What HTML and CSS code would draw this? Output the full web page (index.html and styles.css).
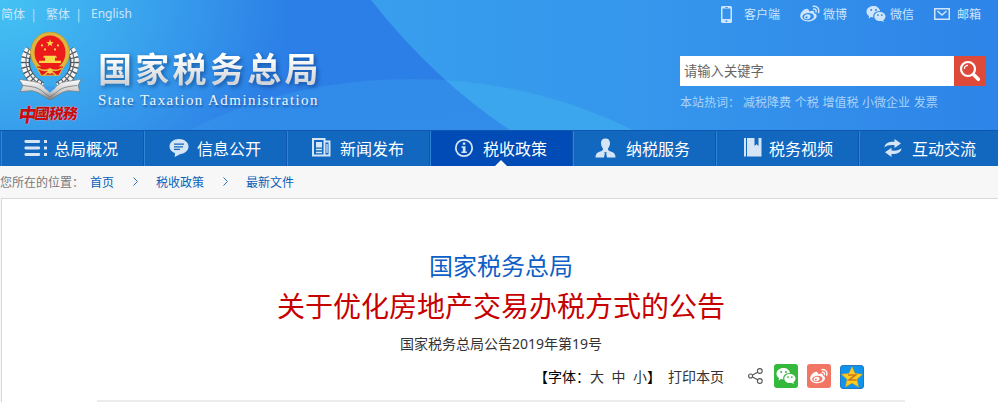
FILE: index.html
```html
<!DOCTYPE html>
<html lang="zh-CN">
<head>
    <meta charset="UTF-8">
    <meta name="viewport" content="width=device-width, initial-scale=1.0">
    <title>国家税务总局</title>
    <link rel="stylesheet" href="styles.css">
</head>
<body>

<!-- shared icon shapes -->
<svg class="sprite" width="0" height="0">
    <symbol id="wechat" viewBox="0 0 20 18">
        <path fill="currentColor" fill-rule="evenodd" d="M7.500 1C3.400 1 .5 3.500 .5 6.700c0 1.900 1 3.400 2.600 4.500l-.6 2.200 2.500-1.300c.8.200 1.500.3 2.300.3-.7-3.500 2.200-6.400 6.800-6.300C13.500 3.100 10.900 1 7.500 1zM5.200 3.900a1 1 0 1 1 0 2 1 1 0 0 1 0-2zm4.700 0a1 1 0 1 1 0 2 1 1 0 0 1 0-2z"/>
        <path fill="currentColor" fill-rule="evenodd" d="M13.900 6.900c-3.200 0-5.600 2-5.600 4.600s2.400 4.600 5.600 4.600c.7 0 1.300-.1 1.900-.2l2 1.100-.5-1.800c1.300-.9 2.200-2.200 2.200-3.700 0-2.600-2.400-4.600-5.600-4.600zM12 9.200a.9.900 0 1 1 0 1.800.9.900 0 0 1 0-1.800zm3.800 0a.9.900 0 1 1 0 1.800.9.900 0 0 1 0-1.800z"/>
    </symbol>
    <symbol id="weibo" viewBox="0 0 20 18">
        <path fill="currentColor" fill-rule="evenodd" d="M8 4.300C6.900 3.200 4.600 4 2.600 6 1 7.700.2 9.500.2 11.100.2 14.300 3.900 16.500 8 16.500c4.900 0 8.700-2.600 8.700-5.500 0-1.700-1.300-2.600-2.700-3 .6-1.600-.3-3.200-4.900-1.500.2-.9 0-1.600-1.100-2.200zM7.900 8.100c3.200-.3 5.800 1 5.900 3.100.2 2-2.200 3.800-5.400 4-3.200.3-5.800-1-6-3.100-.1-2 2.300-3.800 5.500-4z"/>
        <path fill="currentColor" fill-rule="evenodd" d="M8 9.300c-2-.2-4 1-4 2.800 0 1.600 1.500 2.500 3.300 2.200 2-.3 3.400-1.700 3.300-3.100C10.500 10.200 9.500 9.400 8 9.300zM6.500 11.300a1.100 1.100 0 1 1 0 2.200 1.100 1.100 0 0 1 0-2.200z"/>
        <path fill="none" stroke="currentColor" stroke-width="1.500" stroke-linecap="round" d="M13.300 1.300c3.700-.7 6.400 2.600 5.200 6.300M13.700 4.100c1.700-.2 2.800 1.100 2.300 2.800"/>
    </symbol>
</svg>

<header class="header">
    <svg class="header-bg" width="998" height="130" viewBox="0 0 998 130">
        <defs>
            <linearGradient id="bgRight" x1="0" x2="1" y1="0" y2="0">
                <stop offset="0" stop-color="#389eed"/>
                <stop offset=".45" stop-color="#3596ec"/>
                <stop offset="1" stop-color="#2e84e8"/>
            </linearGradient>
            <clipPath id="rightSide"><path d="M371 0Q434 80 510 130H998V0z"/></clipPath>
        </defs>
        <path fill="url(#bgRight)" d="M371 0Q434 80 510 130H998V0z"/>
        <path fill="#3598ec" fill-opacity=".5" d="M190 130Q290 79 410 79T633 130z"/>
        <path fill="#40aff0" fill-opacity=".6" clip-path="url(#rightSide)" d="M190 130Q290 79 410 79T633 130z"/>
    </svg>

    <div class="top-bar">
        <div class="languages">
            <a>简体</a><i>|</i><a>繁体</a><i>|</i><a class="english">English</a>
        </div>
        <ul class="top-links">
            <li class="link-app">
                <svg width="11" height="17" viewBox="0 0 11 17"><path fill="currentColor" fill-rule="evenodd" d="M1.500 0h8Q11 0 11 1.500v14Q11 17 9.500 17h-8Q0 17 0 15.500v-14Q0 0 1.500 0zM1.500 2.500v10.500h8V2.500zM4 1v.7h3V1zM5.500 14.200a.9.900 0 1 0 0 1.800.9.900 0 0 0 0-1.800z"/></svg>
                客户端
            </li>
            <li class="link-weibo"><svg width="20" height="18"><use href="#weibo"/></svg>微博</li>
            <li class="link-wechat"><svg width="20" height="18"><use href="#wechat"/></svg>微信</li>
            <li class="link-mail">
                <svg width="16" height="12" viewBox="0 0 16 12"><path fill="none" stroke="currentColor" stroke-width="1.500" d="M.75.75h14.500v10.500H.75zM3.500 3l4.500 4 4.500-4"/></svg>
                邮箱
            </li>
        </ul>
    </div>

    <div class="brand-row">
        <div class="brand">
            <div class="emblem">
                <svg width="66" height="70" viewBox="0 0 66 68" preserveAspectRatio="none">
                    <defs>
                        <linearGradient id="silver" x1="0" x2="0" y1="0" y2="1">
                            <stop offset="0" stop-color="#fff"/>
                            <stop offset=".6" stop-color="#c9c9c9"/>
                            <stop offset="1" stop-color="#777"/>
                        </linearGradient>
                    </defs>
                    <g fill="none" stroke="#4c555c" stroke-width="9">
                        <path d="M13 17C5 28 7 43 25 53M53 17c8 11 6 26-12 36"/>
                    </g>
                    <g fill="none" stroke="#f4f4f4" stroke-width="7.500" stroke-dasharray="3.500 1.200">
                        <path d="M12 17C4 28 7 43 25 53M54 17c8 11 5 26-13 36"/>
                    </g>
                    <path fill="none" stroke="#626a70" stroke-width="1.200" d="M12 17C5 30 10 43 25 53M54 17c7 13 2 26-13 36"/>
                    <path fill="url(#silver)" stroke="#777" stroke-width=".7" d="M2 46l14 2q6 0 11 5l6 3 6-3q5-5 11-5l14-2-3 6 2 6-12-1q-6 1-11 5l-7 4-7-4q-5-4-11-5L3 58l3-6z"/>
                    <path fill="#3b9be9" d="M27 54q6-3 12 0l-6 5z"/>
                    <path fill="none" stroke="#777" stroke-width=".8" d="M6 52l8 1q8 1 13 6l6 4 6-4q5-5 13-6l8-1"/>
                    <ellipse cx="33" cy="20" rx="19.500" ry="20" fill="#dfb63c" stroke="#b8932c" stroke-width=".7"/>
                    <path fill="#e5161a" stroke="#dfb63c" d="M19 33l5 9h18l5-9z"/>
                    <ellipse cx="33" cy="20" rx="15.500" ry="16.500" fill="#ed1a1c"/>
                    <path fill="#f8d748" d="M33 7l1 2.600h2.800l-2.200 1.700.8 2.700-2.400-1.600-2.400 1.600.8-2.700-2.200-1.700H32z"/>
                    <g fill="#f8d748">
                        <circle cx="25" cy="13" r="1.100"/><circle cx="41" cy="13" r="1.100"/>
                        <circle cx="28" cy="17" r="1.100"/><circle cx="38" cy="17" r="1.100"/>
                        <path d="M27 23h12l1 2H26zM28 25h10v3H28zM22 28h22v2H22z"/>
                    </g>
                    <path fill="none" stroke="#e9c140" stroke-width="1.500" d="M21 35q6 4 12 1 6 3 12-1M27 42l6-5 6 5"/>
                    <circle cx="33" cy="38" r="2.500" fill="#f1cf4b"/>
                </svg>
                <div class="emblem-name"><span>中</span><span>國</span><span>税</span><span>務</span></div>
            </div>
            <div class="brand-text">
                <div class="brand-cn">国家税务总局</div>
                <div class="brand-en">State Taxation Administration</div>
            </div>
        </div>

        <div class="search">
            <form class="search-form">
                <input type="text" placeholder="请输入关键字">
                <button type="button" aria-label="搜索">
                    <svg width="22" height="22" viewBox="0 0 22 22" fill="none" stroke="#fff"><circle cx="9" cy="9" r="7" stroke-width="2.200"/><path stroke-width="1.200" d="M5.300 9q.2-3.500 3.700-3.700"/><path stroke-width="3.600" stroke-linecap="round" d="M14.800 14.800l4.500 4.500"/></svg>
                </button>
            </form>
            <div class="hot-words"><span>本站热词：</span>减税降费 个税 增值税 小微企业 发票</div>
        </div>
    </div>
</header>

<nav class="nav">
    <a class="nav-about">
        <svg width="24" height="18" viewBox="0 0 24 18"><path stroke="currentColor" stroke-width="2.800" stroke-linecap="round" d="M1.800 2.500h13M1.800 9h13M1.800 15.500h13"/><path fill="currentColor" d="M20 1h3v3h-3zM20 7.500h3v3h-3zM20 14h3v3h-3z"/></svg>
        总局概况
    </a>
    <a class="nav-open">
        <svg width="20" height="20" viewBox="0 0 20 20"><path fill="currentColor" d="M10 1c5.300 0 9.500 3.200 9.500 7.600 0 4-3.500 7-8 7.500L5.700 19l.3-3.800C2.700 14 .5 11.600.5 8.600.5 4.200 4.700 1 10 1z"/><path stroke="#1267bf" stroke-width="1.200" d="M5 6.200h10M5 8.800h9M5 11.400h6"/></svg>
        信息公开
    </a>
    <a class="nav-news">
        <svg width="19" height="19" viewBox="0 0 19 19" fill="none" stroke="currentColor"><path stroke-width="2" d="M1 1h11.500v16.500H1zM12.500 3.500H17.500v14H12"/><path stroke-width="1.300" d="M4 11.500h6M4 14.500h6M15 6v9"/><path fill="currentColor" stroke="none" d="M4 4h6v5.500H4z"/></svg>
        新闻发布
    </a>
    <a class="nav-policy active">
        <svg width="20" height="20" viewBox="0 0 20 20"><circle cx="10" cy="10" r="8.200" fill="none" stroke="currentColor" stroke-width="1.800"/><path fill="currentColor" d="M8.800 4.500h2.500v2.300H8.800zM7.500 8.200h4v5.300h1.300V15H7.400v-1.500h1.400V9.700H7.500z"/></svg>
        税收政策
    </a>
    <a class="nav-service">
        <svg width="21" height="20" viewBox="0 0 21 20"><path fill="currentColor" d="M10.500.5c3 0 4.700 2 4.500 4.900-.2 2.600-1.200 4-2 5.100 0 2 .8 2.500 4 3.400 2.400.7 3.500 2.600 3.500 5.600H12l-.8-4 .7-1.300H9.100l.7 1.300-.8 4H.5c0-3 1.100-4.900 3.500-5.600 3.200-.9 4-1.400 4-3.400-.8-1.100-1.800-2.500-2-5.100C5.800 2.500 7.500.5 10.500.5z"/></svg>
        纳税服务
    </a>
    <a class="nav-video">
        <svg width="18" height="19" viewBox="0 0 18 19"><path fill="currentColor" d="M0 0h2v18.500H0zM3 0h7.500v8l2-1.800 2 1.800V0h3v18.500H3z"/></svg>
        税务视频
    </a>
    <a class="nav-talk">
        <svg width="18" height="18" viewBox="0 0 18 18"><path fill="currentColor" d="M.5 8.500C.8 4.500 4 2.600 10.500 2.700V0l6.500 4.500L10.500 9V6.200C5.500 5.800 3 6.500.5 8.500zM17.500 9.300c-.3 4-3.500 5.900-10 5.800V18L1 13.300l6.500-4.500v2.800c5 .4 7.500-.3 10-2.300z"/></svg>
        互动交流
    </a>
</nav>

<div class="breadcrumb">
    <span class="crumb-label">您所在的位置：</span>
    <a>首页</a>
    <svg width="5" height="9" viewBox="0 0 5 9"><path d="M.5.5l4 4-4 4"/></svg>
    <a>税收政策</a>
    <svg width="5" height="9" viewBox="0 0 5 9"><path d="M.5.5l4 4-4 4"/></svg>
    <a>最新文件</a>
</div>

<main class="article">
    <h2>国家税务总局</h2>
    <h1>关于优化房地产交易办税方式的公告</h1>
    <p class="doc-number">国家税务总局公告2019年第19号</p>
    <div class="tools">
        <div class="font-size"><b>【字体：</b><a>大</a><a>中</a><a>小</a><b>】</b></div>
        <a class="print">打印本页</a>
        <svg class="share" width="15" height="16" viewBox="0 0 15 16" fill="none" stroke="#555" stroke-width="1.100"><circle cx="2.600" cy="8" r="2"/><circle cx="11.800" cy="3" r="2.400"/><circle cx="11.800" cy="13" r="2.400"/><path d="M4.500 7l5.200-2.800M4.500 9l5.200 2.800"/></svg>
        <span class="badge badge-wechat"><svg width="20" height="18"><use href="#wechat"/></svg></span>
        <span class="badge badge-weibo"><svg width="18" height="17"><use href="#weibo"/></svg></span>
        <span class="badge badge-qzone"><svg width="22" height="22" viewBox="0 0 22 22"><path fill="#ffcd20" stroke="#e8a80c" stroke-width=".6" d="M11 .8l3 6.700 7.400.8-5.500 5 1.500 7.500L11 17l-6.400 3.800 1.500-7.500-5.500-5L8 7.500z"/><path fill="none" stroke="#c9791b" stroke-width="1.600" d="M7 9h7.500L8 14h7.500"/></svg></span>
    </div>
    <hr>
</main>

</body>
</html>
```
FILE: styles.css
```css
* {
    box-sizing: border-box;
}
body {
    margin: 0;
    height: 402px;
    overflow: hidden;
    background-color: #f7f7f7;
    font-family: "Noto Sans CJK SC", sans-serif;
    font-size: 12px;
}
svg {
    display: block;
    flex: none;
}
.sprite {
    position: absolute;
}
.header {
    position: relative;
    height: 130px;
    background: radial-gradient(ellipse 290px 230px at 0 0, #44c3f3 0, #3ba8ee 42%, rgba(45, 128, 231, 0) 100%), linear-gradient(170deg, #2c7fe6 50%, #2f87e8);
}
.header-bg {
    position: absolute;
    top: 0;
    left: 0;
}
.top-bar,
.brand-row {
    position: relative;
    display: flex;
    justify-content: space-between;
}
.top-bar {
    height: 30px;
    line-height: 28px;
    color: #cfe5fb;
}
.languages {
    display: flex;
    padding-left: 1px;
}
.languages i {
    width: 21px;
    padding-left: 7px;
    font-style: normal;
}
.languages .english {
    font-family: "Noto Sans", sans-serif;
}
.top-links {
    display: flex;
    margin: 0;
    padding: 0 17px 2px 0;
    list-style: none;
}
.top-links li {
    display: flex;
    align-items: center;
}
.link-app {
    gap: 12px;
}
.link-weibo {
    gap: 3px;
    margin-left: 20px;
}
.link-wechat {
    gap: 4px;
    margin-left: 19px;
}
.link-mail {
    gap: 7px;
    margin-left: 20px;
}
.brand {
    display: flex;
    padding: 2px 0 0 17px;
}
.emblem {
    width: 66px;
}
.emblem-name {
    display: flex;
    align-items: center;
    height: 20px;
    padding-left: 3px;
    font-size: 15px;
    font-weight: 900;
    color: #c40d13;
    transform: skewX(-8deg);
    text-shadow: 0 0 1px #fff;
}
.emblem-name span {
    margin-right: -1px;
}
.emblem-name span:first-child {
    font-size: 19px;
    margin: 2px -3px 0 -1px;
}
.brand-text {
    padding: 15px 0 0 15px;
}
.brand-cn {
    height: 42px;
    line-height: 42px;
    font-size: 34px;
    font-weight: 700;
    letter-spacing: 3.300px;
    background: linear-gradient(#fff 25%, #d2d4d8 85%);
    -webkit-background-clip: text;
    background-clip: text;
    color: transparent;
    filter: drop-shadow(2px 2px 2px rgba(0, 40, 100, .5));
}
.brand-en {
    height: 18px;
    margin-top: 2px;
    line-height: 18px;
    font-family: "Liberation Serif", serif;
    font-size: 15px;
    letter-spacing: 1.430px;
    color: #eef5fc;
    text-shadow: 1px 2px 2px rgba(0, 40, 100, .5);
    white-space: nowrap;
}
.search {
    width: 318px;
    padding-top: 26px;
}
.search-form {
    display: flex;
    width: 306px;
    height: 30px;
}
.search-form input {
    width: 274px;
    padding: 0 4px 2px;
    border: 0;
    font-family: inherit;
    font-size: 13.300px;
    background-color: #fff;
}
.search-form input::placeholder {
    color: #666;
}
.search-form button {
    display: flex;
    align-items: center;
    justify-content: center;
    width: 32px;
    padding: 0;
    border: 0;
    background-color: #dd4a39;
}
.hot-words {
    margin-top: 6px;
    line-height: 20px;
    color: #a9d3f8;
    word-spacing: 1px;
    white-space: nowrap;
}
.hot-words span {
    margin-right: 3px;
}
.nav {
    display: grid;
    grid-template-columns: repeat(7, 143px);
    height: 36px;
    padding-left: 1px;
    overflow: hidden;
    border-top: 1px solid #0e57ae;
    background-color: #1267bf;
    font-size: 16px;
    color: #fff;
}
.nav a {
    position: relative;
    display: flex;
    align-items: center;
    padding-bottom: 1px;
    border-left: 1px solid #2b86d5;
    box-shadow: inset -1px 0 #0e57ae;
}
.nav svg {
    margin-top: -1px;
    color: #d5e5f5;
}
.nav .active {
    background-color: #004bb5;
}
.nav .active::after {
    content: "";
    position: absolute;
    bottom: 0;
    left: 64px;
    border: 6px solid transparent;
    border-top: 0;
    border-bottom-color: #f7f7f7;
}
.nav-about {
    gap: 6px;
    padding-left: 22px;
}
.nav-open {
    gap: 8px;
    padding-left: 24px;
}
.nav-news {
    gap: 9px;
    padding-left: 24px;
}
.nav-policy {
    gap: 9px;
    padding-left: 23px;
}
.nav-service {
    gap: 10px;
    padding-left: 21px;
}
.nav-video {
    gap: 7px;
    padding-left: 27px;
}
.nav-talk {
    gap: 10px;
    padding-left: 24px;
}
.breadcrumb {
    display: flex;
    align-items: center;
    height: 32px;
    padding-bottom: 2px;
    color: #777;
}
.breadcrumb a {
    color: #0a5fb9;
}
.breadcrumb svg {
    margin: 1px 18px 0 19px;
    fill: none;
    stroke: #2873c0;
}
.crumb-label {
    width: 90px;
}
.article {
    height: 204px;
    margin-left: 1px;
    padding-top: 48px;
    border: 1px solid #d9d9d9;
    border-width: 1px 0 0 1px;
    background-color: #fff;
    text-align: center;
}
.article h2,
.article h1,
.doc-number {
    padding-left: 2px;
}
.article h2 {
    margin: 0;
    font-size: 24px;
    font-weight: 400;
    line-height: 36px;
    color: #0c60c5;
}
.article h1 {
    margin: 0;
    font-size: 28px;
    font-weight: 400;
    line-height: 44px;
    color: #c70000;
}
.doc-number {
    margin: 0;
    font-family: "Noto Sans", "Noto Sans CJK SC", sans-serif;
    font-size: 14px;
    line-height: 33px;
    color: #333;
}
.tools {
    display: flex;
    align-items: center;
    height: 32px;
    padding-left: 532px;
    font-size: 14px;
    color: #333;
}
.font-size {
    display: flex;
}
.font-size b {
    font-weight: 400;
    color: #000;
}
.font-size a + a {
    margin-left: 7.500px;
}
.print {
    margin-left: 7px;
}
.share {
    margin-left: 24px;
}
.badge {
    display: flex;
    align-items: center;
    justify-content: center;
    width: 24px;
    height: 24px;
    margin-left: 9px;
    border-radius: 3px;
    color: #fff;
}
.badge-wechat {
    margin-left: 11px;
    background-color: #34b93c;
}
.badge-weibo {
    background-color: #f37563;
}
.badge-qzone {
    margin-top: 2px;
    background-color: #0f93ec;
    border: 1px solid #2177c5;
}
.article hr {
    width: 808px;
    height: 2px;
    margin: 8px 0 0 95px;
    border: 0;
    background-color: #ececec;
}
```
